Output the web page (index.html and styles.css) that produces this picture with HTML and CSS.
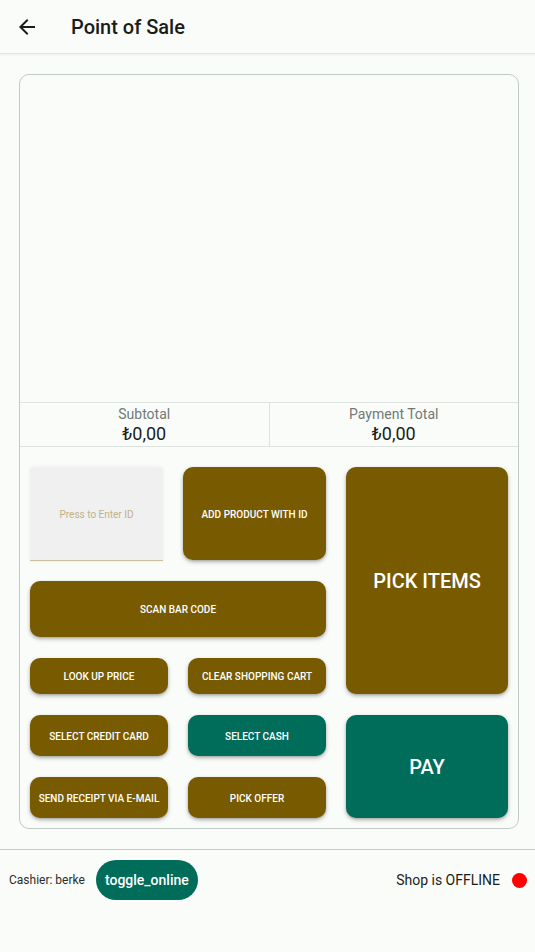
FILE: index.html
```html
<!DOCTYPE html>
<html lang="en">
<head>
<meta charset="utf-8">
<title>Point of Sale</title>
<link rel="stylesheet" href="styles.css">
</head>
<body>
<header class="appbar">
  <button class="back" aria-label="Back">
    <svg width="24" height="24" viewBox="0 0 24 24"><path d="M20 11H7.83l5.59-5.59L12 4l-8 8 8 8 1.41-1.41L7.83 13H20v-2z" fill="#1a1c19"/></svg>
  </button>
  <h1 class="title">Point of Sale</h1>
</header>

<main class="card">
  <div class="cart"></div>
  <div class="totals">
    <div class="total">
      <span class="total-label">Subtotal</span>
      <span class="total-value">₺0,00</span>
    </div>
    <div class="total">
      <span class="total-label">Payment Total</span>
      <span class="total-value">₺0,00</span>
    </div>
  </div>
  <div class="controls">
    <div class="left">
      <div class="row row-top">
        <div class="id-input">Press to Enter ID</div>
        <button class="btn brown add">ADD PRODUCT WITH ID</button>
      </div>
      <button class="btn brown scan">SCAN BAR CODE</button>
      <div class="row row-small">
        <button class="btn brown">LOOK UP PRICE</button>
        <button class="btn brown">CLEAR SHOPPING CART</button>
      </div>
      <div class="row row-mid">
        <button class="btn brown">SELECT CREDIT CARD</button>
        <button class="btn teal">SELECT CASH</button>
      </div>
      <div class="row row-mid">
        <button class="btn brown">SEND RECEIPT VIA E-MAIL</button>
        <button class="btn brown">PICK OFFER</button>
      </div>
    </div>
    <div class="right">
      <button class="btn brown big pick">PICK ITEMS</button>
      <button class="btn teal big pay">PAY</button>
    </div>
  </div>
</main>

<footer class="footer">
  <div class="footer-left">
    <span class="cashier">Cashier: berke</span>
    <button class="pill">toggle_online</button>
  </div>
  <div class="footer-right">
    <span class="status">Shop is OFFLINE</span>
    <span class="dot"></span>
  </div>
</footer>
</body>
</html>
```

FILE: styles.css
```css
* { box-sizing: border-box; }

html, body {
  margin: 0;
  padding: 0;
  background: #fafcf9;
  font-family: Roboto, "Liberation Sans", Arial, sans-serif;
  color: #1a1c19;
}

.appbar {
  height: 54px;
  display: flex;
  align-items: center;
  background: #fafcf9;
  border-bottom: 1px solid #e3e6e2;
  box-shadow: 0 1px 2px rgba(0, 0, 0, 0.06);
}

.back {
  width: 24px;
  height: 24px;
  margin-left: 15px;
  padding: 0;
  border: 0;
  background: none;
  display: flex;
}

.title {
  margin: 0 0 0 32px;
  font-size: 20px;
  font-weight: 500;
  line-height: 24px;
  color: #1a1c19;
}

.card {
  margin: 20px 0 0 19px;
  width: 500px;
  height: 755px;
  border: 1px solid #c2cac5;
  border-radius: 10px;
  background: #fafcf9;
  display: flex;
  flex-direction: column;
}

.cart {
  height: 327px;
}

.totals {
  display: flex;
  height: 45px;
  border-top: 1px solid #dde3df;
  border-bottom: 1px solid #dde3df;
}

.total {
  flex: 1;
  display: flex;
  flex-direction: column;
  align-items: center;
  padding-top: 3px;
}

.total + .total {
  border-left: 1px solid #dde3df;
}

.total-label {
  font-size: 14px;
  line-height: 16px;
  color: #727974;
}

.total-value {
  font-size: 18px;
  line-height: 24px;
  color: #1a1c19;
}

.controls {
  display: flex;
  gap: 20px;
  padding: 20px 10px 10px 10px;
}

.left {
  width: 296px;
  display: flex;
  flex-direction: column;
  gap: 21px;
}

.right {
  width: 162px;
  display: flex;
  flex-direction: column;
  gap: 21px;
}

.row {
  display: flex;
  gap: 20px;
}

.row-top { height: 93px; }
.row-small { height: 36px; }
.row-mid { height: 41px; }

.row-small .btn,
.row-mid .btn {
  flex: 1;
}

.btn {
  border: 0;
  border-radius: 10px;
  color: #ffffff;
  font-family: Roboto, "Liberation Sans", Arial, sans-serif;
  font-size: 10px;
  font-weight: 500;
  letter-spacing: 0;
  padding: 1px 4px 0 4px;
  box-shadow: 0 2px 4px rgba(0, 0, 0, 0.28), 0 1px 2px rgba(0, 0, 0, 0.12);
  white-space: nowrap;
}

.brown { background: #785a00; }
.teal { background: #006c5a; }

.id-input {
  width: 133px;
  height: 94px;
  padding-top: 1px;
  background: #f0f0f0;
  border-bottom: 1px solid #cdbf9b;
  border-radius: 4px 4px 0 0;
  display: flex;
  align-items: center;
  justify-content: center;
  font-size: 10px;
  color: #c1b18a;
  box-shadow: 0 0 4px rgba(0, 0, 0, 0.06);
}

.add { width: 143px; }

.scan { height: 56px; }

.big {
  font-size: 20px;
  font-weight: 500;
}

.pick { height: 227px; }
.pay { height: 103px; }

.footer {
  margin-top: 20px;
  border-top: 1px solid #c4ccc7;
  display: flex;
  justify-content: space-between;
  align-items: center;
  padding: 10px 8px 0 9px;
}

.footer-left {
  display: flex;
  align-items: center;
  gap: 11px;
}

.cashier {
  font-size: 12px;
  color: #2a2c2a;
}

.pill {
  height: 40px;
  padding: 0 8px;
  border: 0;
  border-radius: 20px;
  background: #006c5a;
  color: #ffffff;
  font-family: Roboto, "Liberation Sans", Arial, sans-serif;
  font-size: 14px;
  font-weight: 500;
  width: 102px;
}

.footer-right {
  display: flex;
  align-items: center;
  gap: 12px;
}

.status {
  font-size: 14px;
  color: #1a1c19;
}

.dot {
  width: 15px;
  height: 15px;
  border-radius: 50%;
  background: #ff0000;
}
```
